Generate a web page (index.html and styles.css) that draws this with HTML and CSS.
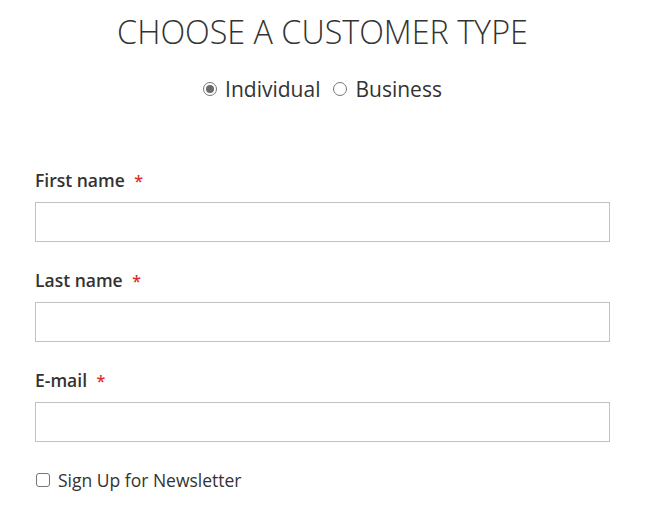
FILE: index.html
```html
<!DOCTYPE html>
<html>
<head>
<meta charset="utf-8">
<link rel="stylesheet" href="styles.css">
</head>
<body>
<div class="page">
  <h1 class="title">CHOOSE A CUSTOMER TYPE</h1>
  <div class="types">
    <label class="type"><span class="radio checked"></span>Individual</label>
    <label class="type"><span class="radio"></span>Business</label>
  </div>
  <form class="form">
    <div class="field">
      <div class="label">First name <span class="req">*</span></div>
      <div class="input"></div>
    </div>
    <div class="field">
      <div class="label">Last name <span class="req">*</span></div>
      <div class="input"></div>
    </div>
    <div class="field">
      <div class="label">E-mail <span class="req">*</span></div>
      <div class="input"></div>
    </div>
    <label class="news"><span class="check"></span>Sign Up for Newsletter</label>
  </form>
</div>
</body>
</html>
```
FILE: styles.css
```css
* { box-sizing: border-box; }
body {
  margin: 0;
  background: #fff;
  font-family: "Open Sans", "Noto Sans", sans-serif;
  color: #333;
}
.page {
  padding: 0 40px 0 35px;
}
.title {
  margin: 0;
  padding-top: 11px;
  font-weight: 300;
  font-size: 32.3px;
  line-height: 40px;
  text-align: center;
}
.types {
  display: flex;
  justify-content: center;
  gap: 13px;
  margin-top: 24px;
  font-size: 21px;
  line-height: 28px;
}
.type {
  display: flex;
  align-items: center;
  gap: 8px;
}
.radio {
  width: 14px;
  height: 14px;
  border: 1px solid #767676;
  border-radius: 50%;
  background: #fff;
  position: relative;
}
.radio.checked::after {
  content: "";
  position: absolute;
  left: 2px;
  top: 2px;
  width: 8px;
  height: 8px;
  border-radius: 50%;
  background: #6b6b6b;
}
.form {
  margin-top: 65px;
}
.field {
  margin-bottom: 26px;
}
.label {
  font-weight: 600;
  font-size: 17.5px;
  line-height: 24px;
  margin-bottom: 9px;
}
.req {
  color: #e02b27;
  font-size: 16px;
  margin-left: 5px;
}
.input {
  height: 40px;
  border: 1px solid #c2c2c2;
  background: #fff;
}
.news {
  display: flex;
  align-items: center;
  gap: 8px;
  font-size: 17.5px;
  line-height: 24px;
  margin-top: 12px;
}
.check {
  width: 14px;
  height: 14px;
  border: 1px solid #767676;
  border-radius: 3px;
  margin-left: 1px;
}
```
